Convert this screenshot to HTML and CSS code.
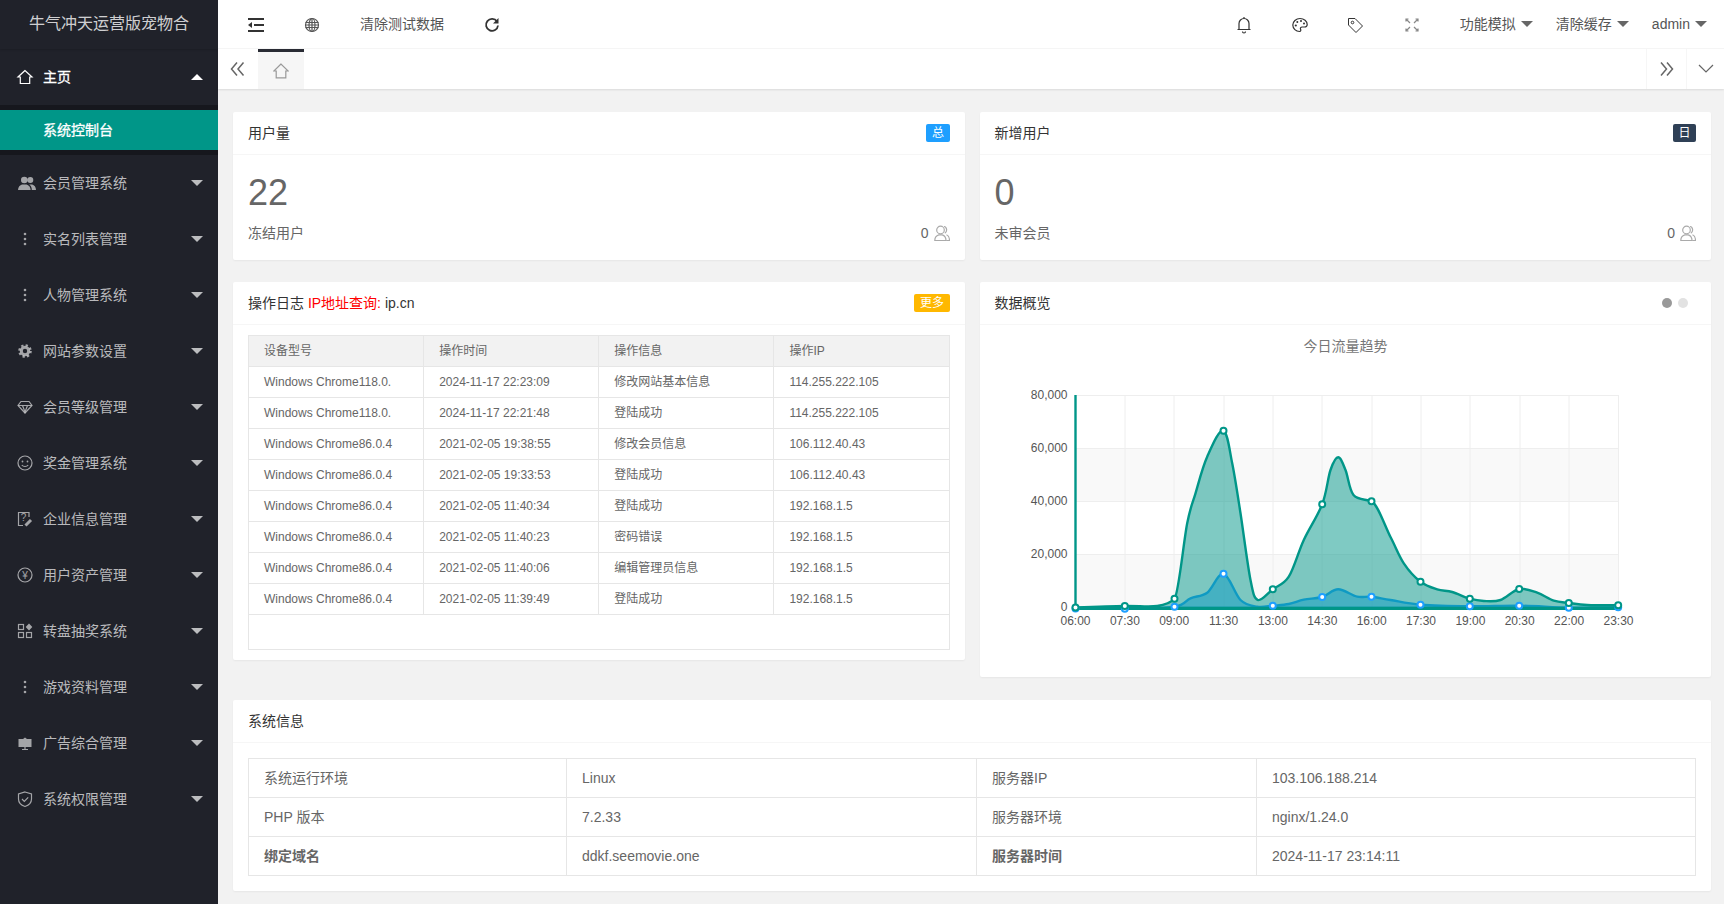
FILE: index.html
```html
<!DOCTYPE html>
<html>
<head>
<title>牛气冲天运营版宠物合</title>
<meta charset="utf-8"/>
<link rel="stylesheet" href="styles.css">
</head>
<body>

<div class="app">

  <aside class="side">
    <div class="logo">牛气冲天运营版宠物合</div>
    <ul class="menu">
      <li class="menu-item open">
        <svg class="menu-icon" viewBox="0 0 18 18"><path class="line" d="M9 2.500 2 9h2.300v6.500h9.400V9H16z"/></svg>
        <span>主页</span><i class="arrow up"></i>
      </li>
      <li class="menu-sub"><a class="active">系统控制台</a></li>
      <li class="menu-item">
        <svg class="menu-icon wide" viewBox="0 0 18 18"><circle cx="6.300" cy="6" r="3.300"/><circle cx="12.300" cy="6" r="3"/><path d="M0 16c0-3.400 2-5 4-5.600h4.600c2 .6 4 2.200 4 5.600z"/><path d="M13.800 16H18c0-3.400-1.800-5-3.800-5.600h-3c1.800 1 2.600 3 2.600 5.600z"/></svg>
        <span>会员管理系统</span><i class="arrow"></i>
      </li>
      <li class="menu-item">
        <svg class="menu-icon" viewBox="0 0 18 18"><circle cx="9" cy="4" r="1.300"/><circle cx="9" cy="9" r="1.300"/><circle cx="9" cy="14" r="1.300"/></svg>
        <span>实名列表管理</span><i class="arrow"></i>
      </li>
      <li class="menu-item">
        <svg class="menu-icon" viewBox="0 0 18 18"><circle cx="9" cy="4" r="1.300"/><circle cx="9" cy="9" r="1.300"/><circle cx="9" cy="14" r="1.300"/></svg>
        <span>人物管理系统</span><i class="arrow"></i>
      </li>
      <li class="menu-item">
        <svg class="menu-icon" viewBox="0 0 18 18"><circle class="line thick" cx="9" cy="9" r="3.700"/><circle class="line teeth" cx="9" cy="9" r="5.800"/></svg>
        <span>网站参数设置</span><i class="arrow"></i>
      </li>
      <li class="menu-item">
        <svg class="menu-icon" viewBox="0 0 18 18"><path class="line" d="M5 3.500h8l3 4-7 7.500-7-7.500z"/><path class="line" d="M2.500 7.500h13M6.500 7.500 9 14l2.500-6.500"/></svg>
        <span>会员等级管理</span><i class="arrow"></i>
      </li>
      <li class="menu-item">
        <svg class="menu-icon" viewBox="0 0 18 18"><circle class="line" cx="9" cy="9" r="7"/><circle cx="6.500" cy="7.500" r=".9"/><circle cx="11.500" cy="7.500" r=".9"/><path class="line" d="M5.800 11c1.600 2 4.800 2 6.400 0"/></svg>
        <span>奖金管理系统</span><i class="arrow"></i>
      </li>
      <li class="menu-item">
        <svg class="menu-icon" viewBox="0 0 18 18"><path class="line" d="M13 7V2.500H2.500v13H7"/><text class="icon-mark" x="7.500" y="11">?</text><path class="line thick" d="M9.500 15.500 15 10"/></svg>
        <span>企业信息管理</span><i class="arrow"></i>
      </li>
      <li class="menu-item">
        <svg class="menu-icon" viewBox="0 0 18 18"><circle class="line" cx="9" cy="9" r="7"/><text class="icon-mark" x="9" y="12.500">¥</text></svg>
        <span>用户资产管理</span><i class="arrow"></i>
      </li>
      <li class="menu-item">
        <svg class="menu-icon" viewBox="0 0 18 18"><rect class="line" x="2.500" y="2.500" width="5" height="5"/><rect class="line" x="2.500" y="10.500" width="5" height="5"/><rect class="line" x="10.500" y="10.500" width="5" height="5"/><path d="M13 1.500 16.300 5 13 8.500 9.700 5z"/></svg>
        <span>转盘抽奖系统</span><i class="arrow"></i>
      </li>
      <li class="menu-item">
        <svg class="menu-icon" viewBox="0 0 18 18"><circle cx="9" cy="4" r="1.300"/><circle cx="9" cy="9" r="1.300"/><circle cx="9" cy="14" r="1.300"/></svg>
        <span>游戏资料管理</span><i class="arrow"></i>
      </li>
      <li class="menu-item">
        <svg class="menu-icon" viewBox="0 0 18 18"><path d="M2.500 5H7l2-1.500L11 5h4.500v8h-13z"/><path class="line" d="M9 13v2.500M6 15.500h6"/></svg>
        <span>广告综合管理</span><i class="arrow"></i>
      </li>
      <li class="menu-item">
        <svg class="menu-icon" viewBox="0 0 18 18"><path class="line" d="M9 2l6.500 2v5c0 4-3.500 6.500-6.500 7.500C6 15.500 2.500 13 2.500 9V4z"/><path class="line" d="M6 9l2.300 2.300L12.200 7.300"/></svg>
        <span>系统权限管理</span><i class="arrow"></i>
      </li>
    </ul>
  </aside>

  <div class="main">

    <div class="topbar">
      <a class="nav-icon">
        <svg width="16" height="16" viewBox="0 0 16 16"><path class="line bold" d="M0 2h16M0 14h16M6 8h10"/><path d="M0 8l4-3v6z"/></svg>
      </a>
      <a class="nav-icon">
        <svg class="globe" width="16" height="16" viewBox="0 0 16 16"><circle class="line" cx="8" cy="8" r="6.500"/><ellipse class="line" cx="8" cy="8" rx="3" ry="6.500"/><path class="line" d="M1.500 5.500h13M1.500 8h13M1.500 10.500h13M8 1.500v13"/></svg>
      </a>
      <a class="nav-text">清除测试数据</a>
      <a class="nav-icon">
        <svg width="16" height="16" viewBox="0 0 16 16"><path class="line bold" d="M13 4.500A6 6 0 1 0 14 8.500"/><path d="M14.500 1v5.500H9z"/></svg>
      </a>
      <div class="nav-right">
        <a class="nav-icon">
          <svg width="16" height="18" viewBox="0 0 16 18"><path class="line" d="M3 13V7.500a5 5 0 0 1 10 0V13M1.500 13.500h13M6.500 15.500a1.500 1.500 0 0 0 3 0M8 1v1.500"/></svg>
        </a>
        <a class="nav-icon">
          <svg width="16" height="16" viewBox="0 0 16 16"><path class="line" d="M8 1.500C4 1.500.8 4.500.8 8c0 3.500 3.200 6.500 6.700 6.500 1.500 0 1.500-1.500 1-2.500s.5-2 1.500-2h2.500c1.500 0 2.700-1 2.700-2.500C15.200 4 12 1.500 8 1.500z"/><circle cx="3.800" cy="8.500" r="1.100"/><circle cx="5.300" cy="5" r="1"/><circle cx="9" cy="4" r="1"/><circle cx="12" cy="6.500" r="1"/></svg>
        </a>
        <a class="nav-icon">
          <svg width="17" height="17" viewBox="0 0 17 17"><path class="line soft" d="M1.500 1.500h6.500l7.500 7.500-6.500 6.500-7.500-7.500z"/><circle class="line soft" cx="5.500" cy="5.500" r="1.300"/></svg>
        </a>
        <a class="nav-icon">
          <svg class="full" width="14" height="14" viewBox="0 0 14 14"><path class="line" d="M1 3.500V1h2.500M1 1l4 4M10.500 1H13v2.500M13 1 9 5M1 10.500V13h2.500M1 13l4-4M10.500 13H13v-2.500M13 13 9 9"/></svg>
        </a>
        <a class="nav-text has-caret">功能模拟<i class="caret"></i></a>
        <a class="nav-text has-caret">清除缓存<i class="caret"></i></a>
        <a class="nav-text has-caret">admin<i class="caret"></i></a>
      </div>
    </div>

    <div class="tabbar">
      <a class="tab-btn first">
        <svg width="16" height="16" viewBox="0 0 16 16"><path class="line mid" d="M7 1.500 1.500 8 7 14.500M13.500 1.500 8 8l5.500 6.500"/></svg>
      </a>
      <a class="tab-home">
        <svg width="16" height="16" viewBox="0 0 16 16"><path class="line" d="M8 1 .8 8h2.400v6.800h9.600V8h2.400z"/></svg>
      </a>
      <a class="tab-btn right">
        <svg width="16" height="16" viewBox="0 0 16 16"><path class="line mid" d="M2 1.500 7.500 8 2 14.500M8 1.500 13.500 8 8 14.500"/></svg>
      </a>
      <a class="tab-btn">
        <svg width="16" height="16" viewBox="0 0 16 16"><path class="line" d="M1 4l7 7 7-7"/></svg>
      </a>
    </div>

    <div class="content">

      <div class="row row-top">
        <div class="card">
          <div class="card-head"><span>用户量</span><span class="badge blue">总</span></div>
          <div class="card-stat">
            <p class="big">22</p>
            <p class="stat-foot"><span>冻结用户</span><span class="stat-num">0
              <svg width="16" height="16" viewBox="0 0 16 16"><circle class="line" cx="6.500" cy="5" r="3.800"/><path class="line" d="M.8 15.500c0-3.500 2-5 4-5.600h3.400c2 .6 3.800 2.100 3.800 5.600z"/><path class="line" d="M10 1.500c3 .3 3.600 5.200.8 6.800M12.500 9.800c1.800.8 3 2.600 3 5.700h-3.300"/></svg>
            </span></p>
          </div>
        </div>
        <div class="card">
          <div class="card-head"><span>新增用户</span><span class="badge navy">日</span></div>
          <div class="card-stat">
            <p class="big">0</p>
            <p class="stat-foot"><span>未审会员</span><span class="stat-num">0
              <svg width="16" height="16" viewBox="0 0 16 16"><circle class="line" cx="6.500" cy="5" r="3.800"/><path class="line" d="M.8 15.500c0-3.500 2-5 4-5.600h3.400c2 .6 3.800 2.100 3.800 5.600z"/><path class="line" d="M10 1.500c3 .3 3.600 5.200.8 6.800M12.500 9.800c1.800.8 3 2.600 3 5.700h-3.300"/></svg>
            </span></p>
          </div>
        </div>
      </div>

      <div class="row row-mid">
        <div class="card">
          <div class="card-head">
            <span>操作日志 <span class="red">IP地址查询:</span> ip.cn</span>
            <span class="badge orange">更多</span>
          </div>
          <div class="card-body log-body">
            <table class="log-table">
              <thead>
                <tr><th>设备型号</th><th>操作时间</th><th>操作信息</th><th>操作IP</th></tr>
              </thead>
              <tbody>
                <tr><td>Windows Chrome118.0.</td><td>2024-11-17 22:23:09</td><td>修改网站基本信息</td><td>114.255.222.105</td></tr>
                <tr><td>Windows Chrome118.0.</td><td>2024-11-17 22:21:48</td><td>登陆成功</td><td>114.255.222.105</td></tr>
                <tr><td>Windows Chrome86.0.4</td><td>2021-02-05 19:38:55</td><td>修改会员信息</td><td>106.112.40.43</td></tr>
                <tr><td>Windows Chrome86.0.4</td><td>2021-02-05 19:33:53</td><td>登陆成功</td><td>106.112.40.43</td></tr>
                <tr><td>Windows Chrome86.0.4</td><td>2021-02-05 11:40:34</td><td>登陆成功</td><td>192.168.1.5</td></tr>
                <tr><td>Windows Chrome86.0.4</td><td>2021-02-05 11:40:23</td><td>密码错误</td><td>192.168.1.5</td></tr>
                <tr><td>Windows Chrome86.0.4</td><td>2021-02-05 11:40:06</td><td>编辑管理员信息</td><td>192.168.1.5</td></tr>
                <tr><td>Windows Chrome86.0.4</td><td>2021-02-05 11:39:49</td><td>登陆成功</td><td>192.168.1.5</td></tr>
                <tr class="empty"><td colspan="4"></td></tr>
              </tbody>
            </table>
          </div>
        </div>

        <div class="card">
          <div class="card-head">
            <span>数据概览</span>
            <span class="dots"><i class="on"></i><i></i></span>
          </div>
          <svg class="chart" viewBox="979.5 325 731.500 352">
            <text class="chart-title" x="1345" y="351">今日流量趋势</text>

            <rect class="band" x="1075" y="448.300" width="543" height="53"/>
            <rect class="band" x="1075" y="554.300" width="543" height="53.700"/>
            <path class="grid" d="M1075 395.500H1618M1075 448.500H1618M1075 501.500H1618M1075 554.500H1618M1124.500 395V608M1173.500 395V608M1223.500 395V608M1272.500 395V608M1321.500 395V608M1371.500 395V608M1420.500 395V608M1469.500 395V608M1519.500 395V608M1568.500 395V608M1618 395V608"/>

            <g class="y-labels">
              <text x="1067" y="399">80,000</text>
              <text x="1067" y="452">60,000</text>
              <text x="1067" y="505">40,000</text>
              <text x="1067" y="558">20,000</text>
              <text x="1067" y="611">0</text>
            </g>
            <g class="x-labels">
              <text x="1075" y="625">06:00</text>
              <text x="1124.400" y="625">07:30</text>
              <text x="1173.700" y="625">09:00</text>
              <text x="1223.100" y="625">11:30</text>
              <text x="1272.400" y="625">13:00</text>
              <text x="1321.800" y="625">14:30</text>
              <text x="1371.200" y="625">16:00</text>
              <text x="1420.500" y="625">17:30</text>
              <text x="1469.900" y="625">19:00</text>
              <text x="1519.200" y="625">20:30</text>
              <text x="1568.600" y="625">22:00</text>
              <text x="1618" y="625">23:30</text>
            </g>

            <path class="area-blue" d="M1075 608S1107.800 608.700 1124.300 608.700S1163 608.400 1174 606.700S1184.600 600.600 1190 598.300S1201.200 596.800 1206.700 592.700S1217.500 572.700 1223 573.700S1234.400 594.500 1240 600S1251.300 605.700 1256.700 606.700S1267 606.200 1272.300 605.700S1283.100 605 1288.300 604S1297.700 600.900 1303.300 599.700S1316 598.700 1321.700 597S1331.900 589.300 1337.700 589.300S1351.100 595.500 1356.700 596.700S1365.400 596.100 1371 596.700S1381.800 598.700 1390 600S1406.800 603.700 1420 604.700S1452.800 606.100 1469.300 606.300S1502.200 605.500 1518.700 605.700S1551.800 607.400 1568.300 607.700S1601 607.400 1617.700 607.300V608H1075Z"/>
            <path class="area-green" d="M1075 607.500S1110.700 606.200 1124.300 606S1148.400 607.200 1156.700 606S1170 603 1174 598.700S1183.200 540.900 1186.700 523.300S1191.700 504.400 1195 493.300S1202 467.100 1206.700 456.700S1218.800 428.500 1223 430.700S1228.900 449.500 1231.700 463.300S1237 493.900 1240 513.300S1247.100 565.500 1250 580S1253.600 598.500 1257.300 600S1267.100 593.200 1272.300 589.300S1283.100 584.900 1288.300 576.700S1297.700 552.100 1303.300 540S1317.200 516 1321.700 504.300S1327.300 477.800 1330 470S1335.200 457.300 1337.700 457.300S1342.400 463.700 1345 470S1348.700 489.800 1353 495S1365 499 1371 501.300S1384.600 526.700 1390 537S1398.300 555.800 1403.300 563.300S1414.400 577.400 1420 581.700S1431.400 587.600 1436.700 589.300S1446.300 590.400 1451.700 592S1464 597.200 1469.300 598.700S1478.200 600.800 1483.300 601S1494.100 602 1500 600S1512.600 590.200 1518.700 589S1530.900 590.700 1536.700 592.700S1548 599 1553.300 600.700S1562.700 602.300 1568.300 603S1578.500 604.600 1586.700 605S1610 605.300 1617.700 605.300V608H1075Z"/>

            <path class="axis" d="M1075 395V609"/>
            <path class="axis wide-axis" d="M1075 608.500H1618"/>

            <g class="dots-blue">
              <circle cx="1075" cy="608.500" r="3"/><circle cx="1124.300" cy="608.700" r="3"/><circle cx="1174" cy="606.700" r="3"/><circle cx="1223" cy="573.700" r="3"/><circle cx="1272.300" cy="605.700" r="3"/><circle cx="1321.700" cy="597" r="3"/><circle cx="1371" cy="596.700" r="3"/><circle cx="1420" cy="604.700" r="3"/><circle cx="1469.300" cy="606.300" r="3"/><circle cx="1518.700" cy="605.700" r="3"/><circle cx="1568.300" cy="607.700" r="3"/><circle cx="1617.700" cy="607.300" r="3"/>
            </g>
            <g class="dots-green">
              <circle cx="1075" cy="607.500" r="3"/><circle cx="1124.300" cy="606" r="3"/><circle cx="1174" cy="598.700" r="3"/><circle cx="1223" cy="430.700" r="3"/><circle cx="1272.300" cy="589.300" r="3"/><circle cx="1321.700" cy="504.300" r="3"/><circle cx="1371" cy="501.300" r="3"/><circle cx="1420" cy="581.700" r="3"/><circle cx="1469.300" cy="598.700" r="3"/><circle cx="1518.700" cy="589" r="3"/><circle cx="1568.300" cy="603" r="3"/><circle cx="1617.700" cy="605.300" r="3"/>
            </g>
          </svg>
        </div>
      </div>

      <div class="card">
        <div class="card-head"><span>系统信息</span></div>
        <div class="card-info">
          <table class="info-table">
            <colgroup><col class="c1"><col class="c2"><col class="c3"><col></colgroup>
            <tr><td>系统运行环境</td><td>Linux</td><td>服务器IP</td><td>103.106.188.214</td></tr>
            <tr><td>PHP 版本</td><td>7.2.33</td><td>服务器环境</td><td>nginx/1.24.0</td></tr>
            <tr><td><b>绑定域名</b></td><td>ddkf.seemovie.one</td><td><b>服务器时间</b></td><td>2024-11-17 23:14:11</td></tr>
          </table>
        </div>
      </div>

    </div>
  </div>
</div>

</body>
</html>
```

FILE: styles.css
```css
* { box-sizing:border-box; }
html, body { margin:0; padding:0; height:100%; overflow:hidden; }
body {
    font-family: "Liberation Sans", "Noto Sans CJK SC", sans-serif;
    font-size: 14px;
    line-height: 20px;
    color: #666;
    background: #f2f2f2;
}
ul { list-style:none; margin:0; padding:0; }
p { margin:0; }
i { font-style:normal; }
svg { display:block; fill:currentColor; }
svg .line { fill:none; stroke:currentColor; stroke-width:1.2; }
svg .bold { stroke-width:1.8; }
svg .mid { stroke-width:1.5; }
svg .soft { stroke-width:1; }
svg .thick { stroke-width:3; }
svg .teeth { stroke-width:2; stroke-dasharray:2.3 2.25; }
.icon-mark { font-size:10px; text-anchor:middle; stroke:none; }

.app { display:flex; height:904px; }

/* sidebar */
.side { width:218px; flex:none; background:#20222a; color:rgba(255,255,255,.7); }
.logo {
    height:49px;
    line-height:48px;
    text-align:center;
    font-size:16px;
    color:rgba(255,255,255,.8);
    box-shadow:0 1px 2px 0 rgba(0,0,0,.15);
}
.menu-item { display:flex; align-items:center; height:56px; }
.menu-item.open { color:#fff; }
.menu-item.open span { -webkit-text-stroke:.3px #fff; }
.menu-icon { width:18px; height:18px; margin:0 9px 0 16px; flex:none; opacity:.85; }
.menu-icon.wide { margin:0 7px 0 18px; }
.menu-item.open .menu-icon { opacity:1; }
.arrow {
    margin-left:auto;
    margin-right:15px;
    border-style:solid;
    border-width:6px 6px 0;
    border-color:rgba(255,255,255,.7) transparent transparent;
}
.arrow.up { border-width:0 6px 6px; border-color:transparent transparent #fff; }
.menu-sub { padding:5px 0; background:rgba(0,0,0,.3); }
.menu-sub a {
    display:block;
    height:40px;
    line-height:40px;
    padding-left:43px;
    color:#fff;
    -webkit-text-stroke:.3px #fff;
}
.menu-sub .active { background:#009688; }

/* top nav */
.main { flex:1; min-width:0; display:flex; flex-direction:column; }
.topbar {
    display:flex;
    align-items:center;
    height:49px;
    padding-left:10px;
    background:#fff;
    border-bottom:1px solid #f6f6f6;
    color:#333;
}
.nav-icon { width:56px; display:flex; justify-content:center; align-items:center; padding-top:2px; }
.nav-text { padding:0 20px; color:#555; }
.nav-right { margin-left:auto; padding-right:14px; display:flex; align-items:center; }
.has-caret { display:flex; align-items:center; padding-right:3px; }
.caret {
    margin-left:5px;
    border-style:solid;
    border-width:6px 6px 0;
    border-color:#666 transparent transparent;
}
.globe { color:#555; }
.full { color:#888; }

/* tabs */
.tabbar {
    display:flex;
    align-items:stretch;
    height:40px;
    background:#fff;
    color:#666;
    box-shadow:0 1px 2px 0 rgba(0,0,0,.1);
}
.tab-btn {
    width:40px;
    display:flex;
    justify-content:center;
    align-items:center;
    border-left:1px solid #f6f6f6;
}
.tab-btn.first { width:39.500px; border-left:0; }
.tab-btn.right { margin-left:auto; }
.tab-btn:last-child { width:38px; }
.tab-home {
    width:46px;
    display:flex;
    justify-content:center;
    align-items:center;
    background:#f6f6f6;
    border-top:3px solid #292b34;
    color:#999;
}

/* cards */
.content { padding:23px 13px 0 15px; }
.row { display:grid; grid-template-columns:1fr 1fr; column-gap:15px; align-items:start; }
.row-top { margin-bottom:22px; }
.row-mid { margin-bottom:23px; }
.card { background:#fff; border-radius:2px; box-shadow:0 1px 2px 0 rgba(0,0,0,.05); }
.card-head {
    display:flex;
    justify-content:space-between;
    align-items:center;
    height:43px;
    padding:0 15px;
    border-bottom:1px solid #f6f6f6;
    color:#333;
}
.badge {
    display:block;
    height:18px;
    line-height:18px;
    padding:0 5.500px;
    font-size:12px;
    color:#fff;
    border-radius:2px;
}
.badge.blue { background:#1e9fff; }
.badge.navy { background:#2f4056; }
.badge.orange { background:#ffb800; }
.red { color:#f00; }
.card-stat { padding:15px; }
.big { padding:5px 0 10px; font-size:36px; line-height:36px; color:#666; }
.stat-foot { display:flex; justify-content:space-between; line-height:24px; }
.stat-num { display:flex; align-items:center; gap:5px; color:#666; }
.stat-num svg { color:#aaa; }

.log-body { padding:10px 15px; }
.log-table { width:100%; table-layout:fixed; border-collapse:collapse; font-size:12px; }
.log-table th, .log-table td {
    height:31px;
    padding:0 15px;
    border:1px solid #e6e6e6;
    text-align:left;
    font-weight:normal;
    white-space:nowrap;
    overflow:hidden;
}
.log-table th { background:#f2f2f2; }
.log-table .empty td { height:35px; }

.dots { display:flex; gap:6px; margin-right:8px; }
.dots i { width:10px; height:10px; border-radius:50%; background:#e2e2e2; }
.dots .on { background:#999; }

.chart { width:100%; height:352px; }
.chart-title { font-size:14px; fill:#777; text-anchor:middle; }
.band { fill:#f9f9f9; }
.grid { fill:none; stroke:#eee; stroke-width:1; }
.y-labels text, .x-labels text { font-size:12px; fill:#555; }
.y-labels text { text-anchor:end; }
.x-labels text { text-anchor:middle; }
.area-blue { fill:rgba(30,159,255,.5); stroke:#1e9fff; stroke-width:2.4; }
.area-green { fill:rgba(0,150,136,.5); stroke:#009688; stroke-width:2.4; }
.axis { fill:none; stroke:#009688; stroke-width:2.4; }
.wide-axis { stroke-width:3; }
.dots-blue circle { fill:#fff; stroke:#1e9fff; stroke-width:2; }
.dots-green circle { fill:#fff; stroke:#009688; stroke-width:2; }

.card-info { padding:15px; }
.info-table { width:100%; table-layout:fixed; border-collapse:collapse; }
.info-table td { height:39px; padding:0 15px; border:1px solid #e6e6e6; }
.c1 { width:318px; }
.c2 { width:410px; }
.c3 { width:280px; }
```
